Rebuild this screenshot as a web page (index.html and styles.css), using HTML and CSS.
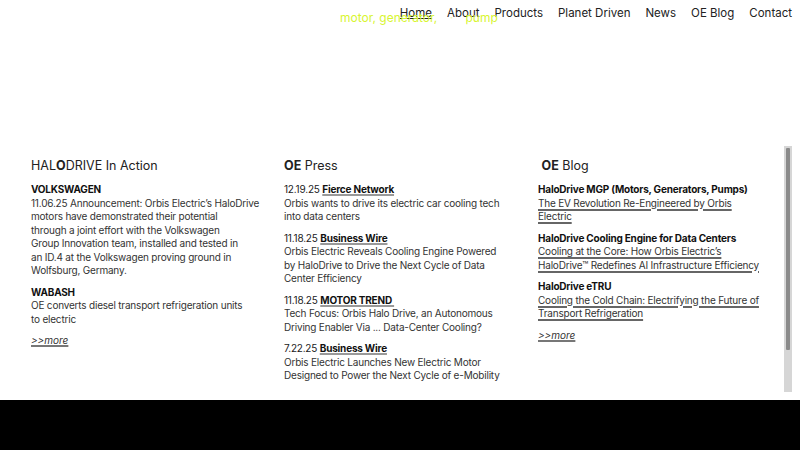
FILE: index.html
```html
<!DOCTYPE html>
<html lang="en">
<head>
    <meta charset="UTF-8">
    <meta name="viewport" content="width=device-width, initial-scale=1.0">
    <title>Orbis Electric</title>
    <link rel="stylesheet" href="styles.css">
</head>
<body>
    <header class="topbar">
        <div class="tagline">motor, generator, <span class="tag-dot">&middot;</span> pump</div>
        <nav class="main-nav">
            <a href="#" class="active">Home</a>
            <a href="#">About</a>
            <a href="#">Products</a>
            <a href="#">Planet Driven</a>
            <a href="#">News</a>
            <a href="#">OE Blog</a>
            <a href="#">Contact</a>
        </nav>
    </header>

    <div class="hero"></div>

    <div class="news-box">
        <div class="news-scroll">
            <div class="news-grid">
                <div class="news-col wide">
                    <h2>HAL<b>O</b>DRIVE In Action</h2>
                    <div class="news-item">
                        <h3>VOLKSWAGEN</h3>
                        <p>11.06.25 Announcement: Orbis Electric’s HaloDrive<br>
                        motors have demonstrated their potential<br>
                        through a joint effort with the Volkswagen<br>
                        Group Innovation team, installed and tested in<br>
                        an ID.4 at the Volkswagen proving ground in<br>
                        Wolfsburg, Germany.</p>
                    </div>
                    <div class="news-item">
                        <h3>WABASH</h3>
                        <p>OE converts diesel transport refrigeration units <span class="nowrap">to electric</span></p>
                    </div>
                    <a href="#" class="more">&gt;&gt;more</a>
                </div>

                <div class="news-col">
                    <h2><b>OE</b> Press</h2>
                    <div class="news-item">
                        <div class="press-head">12.19.25 <a href="#">Fierce Network</a></div>
                        <p>Orbis wants to drive its electric car cooling tech into data centers</p>
                    </div>
                    <div class="news-item">
                        <div class="press-head">11.18.25 <a href="#">Business Wire</a></div>
                        <p>Orbis Electric Reveals Cooling Engine Powered by HaloDrive to Drive the Next Cycle of Data Center Efficiency</p>
                    </div>
                    <div class="news-item">
                        <div class="press-head">11.18.25 <a href="#">MOTOR TREND&nbsp;</a></div>
                        <p>Tech Focus: Orbis Halo Drive, an Autonomous Driving Enabler Via ... Data-Center Cooling?</p>
                    </div>
                    <div class="news-item">
                        <div class="press-head">7.22.25 <a href="#">Business Wire</a></div>
                        <p>Orbis Electric Launches New Electric Motor Designed to Power the Next Cycle of e-Mobility</p>
                    </div>
                </div>

                <div class="news-col">
                    <h2>&nbsp;<b>OE</b> Blog</h2>
                    <div class="news-item">
                        <h3>HaloDrive MGP (Motors, Generators, Pumps)</h3>
                        <a href="#" class="blog-link">The EV Revolution Re-Engineered by Orbis Electric</a>
                    </div>
                    <div class="news-item">
                        <h3>HaloDrive Cooling Engine for Data Centers</h3>
                        <a href="#" class="blog-link">Cooling at the Core: How Orbis Electric’s HaloDrive™ Redefines AI Infrastructure Efficiency</a>
                    </div>
                    <div class="news-item">
                        <h3>HaloDrive eTRU</h3>
                        <a href="#" class="blog-link">Cooling the Cold Chain: Electrifying the Future of Transport Refrigeration</a>
                    </div>
                    <a href="#" class="more">&gt;&gt;more</a>
                </div>
            </div>
        </div>
        <div class="scroll-rail"><div class="scroll-thumb"></div></div>
    </div>

    <footer class="site-footer"></footer>
</body>
</html>
```

FILE: styles.css
```css
body {
    margin: 0;
    font-family: Inter, "Open Sans", sans-serif;
    color: #222;
    background: #fff;
}

a {
    color: inherit;
}

.nowrap {
    white-space: nowrap;
}

.topbar {
    position: relative;
    height: 25px;
    padding-top: 5px;
}

.main-nav {
    display: flex;
    justify-content: flex-end;
    gap: 15px;
    padding-right: 8px;
    font-size: 11.5px;
    line-height: 17px;
}

.main-nav a {
    text-decoration: none;
    color: #222;
}

.main-nav a.active {
    text-decoration: underline;
    text-underline-offset: 1px;
}

.tagline {
    position: absolute;
    left: 340px;
    top: 10px;
    color: #d8f531;
    font-size: 12px;
    white-space: nowrap;
}

.tag-dot {
    color: #eef9b0;
    margin: 0 9px;
}

.hero {
    height: 116px;
}

.news-box {
    display: flex;
    height: 246px;
    margin-right: 8px;
}

.news-scroll {
    flex: 1;
    overflow: hidden;
}

.scroll-rail {
    width: 8px;
    background: #d6d6d6;
    padding-top: 2px;
}

.scroll-thumb {
    width: 4px;
    height: 202px;
    margin: 0 auto;
    background: #8a8a8a;
    border-radius: 1px;
}

.news-grid {
    display: grid;
    grid-template-columns: 253px 254px 226px;
    padding: 11px 0 0 31px;
}

.news-col {
    width: 225px;
    font-size: 10px;
    line-height: 13.5px;
}

.news-col.wide {
    width: 229px;
}

.news-col h2 {
    font-size: 12.5px;
    font-weight: 400;
    margin: 0 0 8px;
    line-height: 18px;
}

.news-col h2 b {
    font-weight: 700;
}

.news-item {
    margin-bottom: 8px;
    letter-spacing: -0.2px;
}

.news-item h3 {
    margin: 0;
    font-size: 10px;
    font-weight: 700;
    color: #111;
}

.news-item p {
    margin: 0;
    color: #333;
}

.press-head a {
    font-weight: 700;
    color: #111;
    text-decoration: underline;
    text-decoration-color: #999;
    text-decoration-thickness: 2px;
    text-underline-offset: 1px;
}

.blog-link {
    color: #333;
    text-decoration-color: #666;
    text-decoration-thickness: 1.5px;
    text-underline-offset: 2px;
}

.more {
    display: inline-block;
    font-style: italic;
    color: #333;
    text-decoration-color: #777;
    text-decoration-thickness: 1.5px;
}

.site-footer {
    height: 50px;
    margin-top: 8px;
    background: #000;
}
```
